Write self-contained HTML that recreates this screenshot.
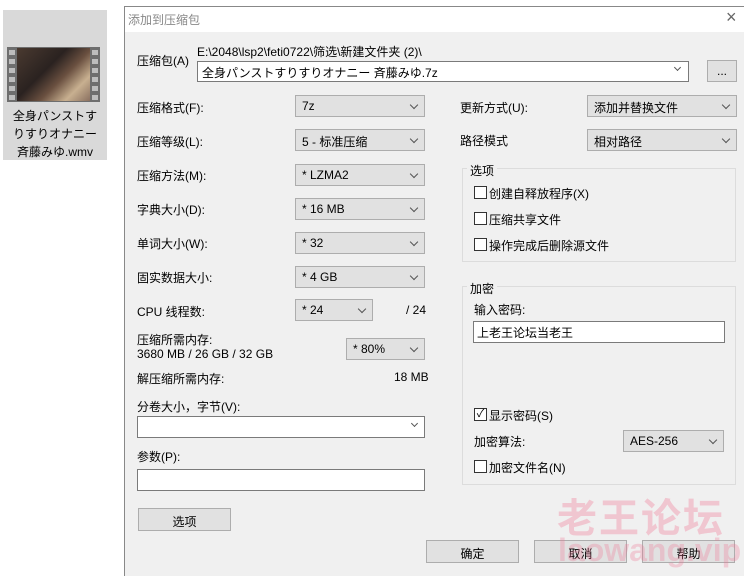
<!DOCTYPE html>
<html><head><meta charset="utf-8"><style>
*{margin:0;padding:0;box-sizing:border-box}
body{width:744px;height:576px;background:#fff;position:relative;overflow:hidden;font-family:"Liberation Sans","Noto Sans CJK SC",sans-serif;font-size:12px;color:#000}
.a{position:absolute;white-space:nowrap}
.dd{position:absolute;background:#e1e1e1;border:1px solid #adadad;height:22px;padding:3px 0 0 6px;font-size:12px}
.dd:after{content:"";position:absolute;right:7px;top:6px;width:5px;height:5px;border-right:1px solid #555;border-bottom:1px solid #555;transform:rotate(45deg)}
.in{position:absolute;background:#fff;border:1px solid #7a7a7a;height:22px}
.cb{position:absolute;width:13px;height:13px;border:1px solid #333;background:#fff}
.btn{position:absolute;background:#e1e1e1;border:1px solid #adadad;height:23px;text-align:center;padding-top:4px}
.grp{position:absolute;border:1px solid #dcdcdc}
.gl{position:absolute;background:#f0f0f0;padding:0 3px}
</style></head><body>
<div class="a" style="left:3px;top:10px;width:104px;height:150px;background:#d9d9d9"></div>
<div class="a" style="left:7px;top:47px;width:93px;height:55px;background:#6e6e6e"></div>
<div class="a" style="left:17px;top:48px;width:73px;height:53px;background:linear-gradient(135deg,#4a3a30 0%,#2a2220 40%,#6a5040 60%,#c8b090 80%,#8a7060 100%)"></div>
<div class="a" style="left:9px;top:50px;width:6px;height:50px;background:repeating-linear-gradient(#bdbdbd 0 5px,#6e6e6e 5px 9px)"></div>
<div class="a" style="left:92px;top:50px;width:6px;height:50px;background:repeating-linear-gradient(#bdbdbd 0 5px,#6e6e6e 5px 9px)"></div>
<div class="a" style="left:3px;top:107px;width:104px;text-align:center;line-height:18px;font-size:12px">全身パンストす<br>りすりオナニー<br>斉藤みゆ.wmv</div>

<div class="a" style="left:124px;top:6px;width:620px;height:570px;background:#f0f0f0;border-left:1px solid #888;border-top:1px solid #888"></div>
<div class="a" style="left:125px;top:7px;width:619px;height:25px;background:#fff"></div>
<div class="a" style="left:128px;top:11px;color:#888">添加到压缩包</div>
<div class="a" style="left:726px;top:7px;font-size:18px;color:#666">×</div>

<div class="a" style="left:137px;top:52px">压缩包(A)</div>
<div class="a" style="left:197px;top:43px">E:\2048\lsp2\feti0722\筛选\新建文件夹 (2)\</div>
<div class="in" style="left:197px;top:61px;width:492px;height:21px;padding:2px 4px">全身パンストすりすりオナニー 斉藤みゆ.7z</div>
<div class="a" style="left:675px;top:65px;width:5px;height:5px;border-right:1px solid #555;border-bottom:1px solid #555;transform:rotate(45deg)"></div>
<div class="btn" style="left:707px;top:60px;width:30px;height:22px;padding-top:3px">...</div>

<div class="a" style="left:137px;top:99px">压缩格式(F):</div><div class="dd" style="left:295px;top:95px;width:130px">7z</div>
<div class="a" style="left:137px;top:133px">压缩等级(L):</div><div class="dd" style="left:295px;top:129px;width:130px">5 - 标准压缩</div>
<div class="a" style="left:137px;top:167px">压缩方法(M):</div><div class="dd" style="left:295px;top:164px;width:130px">* LZMA2</div>
<div class="a" style="left:137px;top:201px">字典大小(D):</div><div class="dd" style="left:295px;top:198px;width:130px">* 16 MB</div>
<div class="a" style="left:137px;top:235px">单词大小(W):</div><div class="dd" style="left:295px;top:232px;width:130px">* 32</div>
<div class="a" style="left:137px;top:269px">固实数据大小:</div><div class="dd" style="left:295px;top:266px;width:130px">* 4 GB</div>
<div class="a" style="left:137px;top:303px">CPU 线程数:</div><div class="dd" style="left:295px;top:299px;width:78px">* 24</div>
<div class="a" style="left:406px;top:303px">/ 24</div>
<div class="a" style="left:137px;top:331px">压缩所需内存:</div>
<div class="a" style="left:137px;top:347px">3680 MB / 26 GB / 32 GB</div>
<div class="dd" style="left:346px;top:338px;width:79px">* 80%</div>
<div class="a" style="left:137px;top:370px">解压缩所需内存:</div>
<div class="a" style="left:394px;top:370px">18 MB</div>
<div class="a" style="left:137px;top:398px">分卷大小，字节(V):</div>
<div class="in" style="left:137px;top:416px;width:288px"></div>
<div class="a" style="left:412px;top:421px;width:5px;height:5px;border-right:1px solid #555;border-bottom:1px solid #555;transform:rotate(45deg)"></div>
<div class="a" style="left:137px;top:448px">参数(P):</div>
<div class="in" style="left:137px;top:469px;width:288px"></div>
<div class="btn" style="left:138px;top:508px;width:93px">选项</div>

<div class="a" style="left:460px;top:99px">更新方式(U):</div><div class="dd" style="left:587px;top:95px;width:150px">添加并替换文件</div>
<div class="a" style="left:460px;top:132px">路径模式</div><div class="dd" style="left:587px;top:129px;width:150px">相对路径</div>

<div class="grp" style="left:462px;top:168px;width:274px;height:94px"></div>
<div class="gl" style="left:467px;top:162px">选项</div>
<div class="cb" style="left:474px;top:186px"></div><div class="a" style="left:489px;top:185px">创建自释放程序(X)</div>
<div class="cb" style="left:474px;top:212px"></div><div class="a" style="left:489px;top:211px">压缩共享文件</div>
<div class="cb" style="left:474px;top:238px"></div><div class="a" style="left:489px;top:237px">操作完成后删除源文件</div>

<div class="grp" style="left:462px;top:286px;width:274px;height:199px"></div>
<div class="gl" style="left:467px;top:280px">加密</div>
<div class="a" style="left:474px;top:301px">输入密码:</div>
<div class="in" style="left:473px;top:321px;width:252px;padding:2px 3px">上老王论坛当老王</div>
<div class="cb" style="left:474px;top:408px;font-size:11px;line-height:11px;text-align:center">✓</div><div class="a" style="left:489px;top:407px">显示密码(S)</div>
<div class="a" style="left:474px;top:433px">加密算法:</div><div class="dd" style="left:623px;top:430px;width:101px">AES-256</div>
<div class="cb" style="left:474px;top:460px"></div><div class="a" style="left:489px;top:459px">加密文件名(N)</div>

<div class="btn" style="left:426px;top:540px;width:93px">确定</div>
<div class="btn" style="left:534px;top:540px;width:93px">取消</div>
<div class="btn" style="left:642px;top:540px;width:93px">帮助</div>
<div class="a" style="left:557px;top:486px;font-size:40px;font-weight:bold;color:rgba(240,120,150,0.35);letter-spacing:2px">老王论坛</div>
<div class="a" style="left:558px;top:532px;font-size:32px;font-weight:bold;color:rgba(240,120,150,0.3)">laowang.vip</div>
</body></html>
